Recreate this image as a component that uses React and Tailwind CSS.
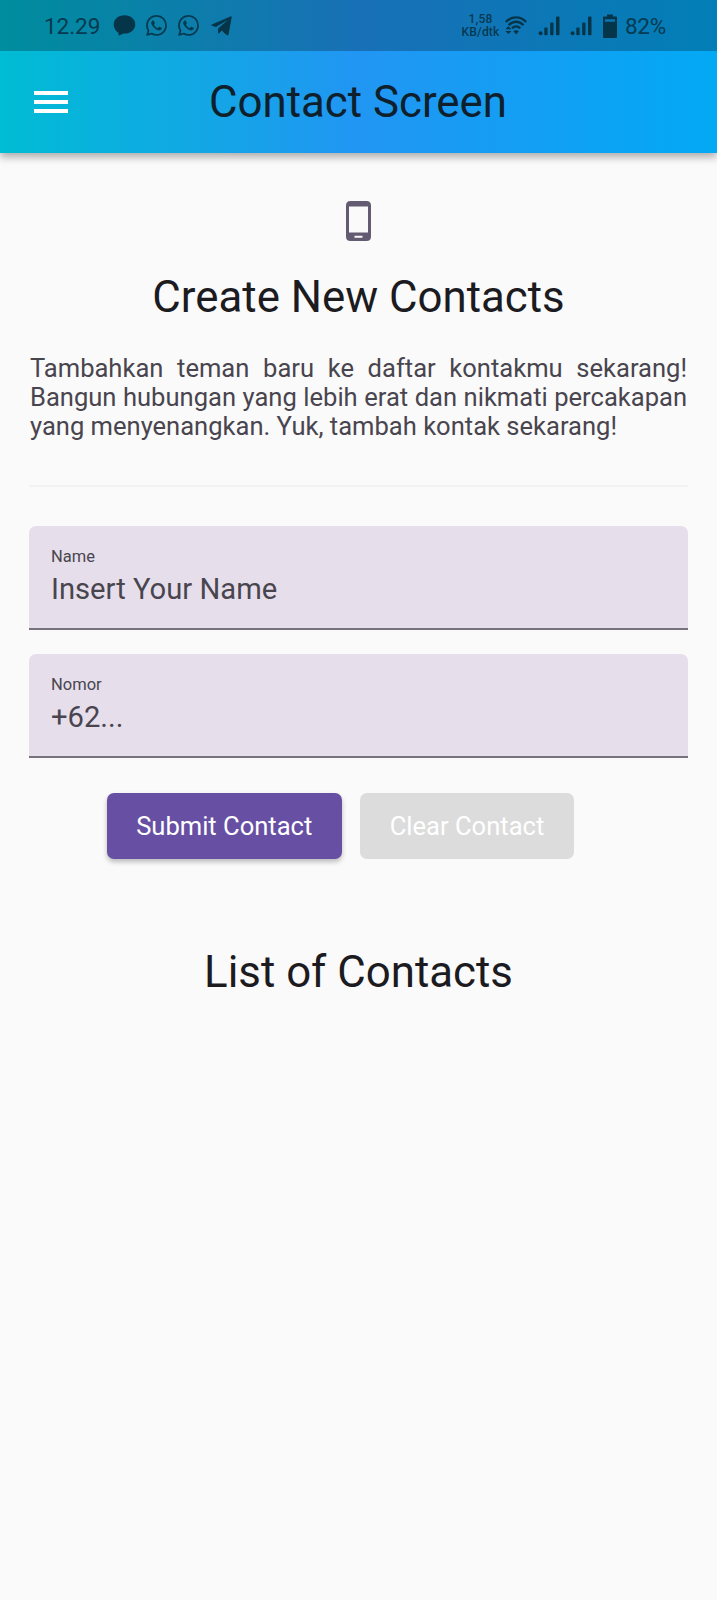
function StatusBar() {
  return (
    <div className="flex h-[51px] items-center bg-black/25 pl-[44px] text-[#053a50]">
      <span className="w-[56px] shrink-0 pt-px text-[22.500px] leading-[28px] tracking-[-0.050px] whitespace-nowrap">12.29</span>
      <svg className="ml-[13px] h-[21px] w-[23px] shrink-0" viewBox="0 0 23 21" fill="#053548">
        <path d="M11.5 .3C17.8.3 22.3 4.4 22.3 9.5s-4.500 9.100-10.800 9.100h-.6c-.5 0-4.700 2-5 2-.5 0-.2-2.500-.5-2.900C2.600 16 .7 13.100.7 9.500.7 4.400 5.200.3 11.500.3z" />
      </svg>
      <WhatsApp className="ml-[9.500px]" />
      <WhatsApp className="ml-[11px]" />
      <svg className="mt-px ml-[12px] h-[20px] w-[22px] shrink-0" viewBox="0 0 22 20" fill="#053548">
        <path d="M20.700 1.100 17.600 18.400c-.2 1-1.200 1.200-2 .7L10.600 14.400l-2.300 2.900c-.4.4-1.200.2-1.200-.5v-4.400L17 3.800 5 10.900.9 9.700C.1 9.400.1 8.900.9 8.500L19.400.5c.8-.3 1.500-.1 1.300.6z" />
      </svg>
      <div className="ml-auto mr-[5.500px] flex w-[38px] shrink-0 flex-col items-center pt-px text-[12px] leading-[13.500px] font-medium whitespace-nowrap">
        <span className="tracking-[0.200px]">1,58</span>
        <span className="tracking-[0.200px]">KB/dtk</span>
      </div>
      <svg className="h-[20px] w-[22px] shrink-0" viewBox="0 0 22 20" fill="none" stroke="#053548" strokeWidth="2.300">
        <path d="M.8 6C6.800-.3 15.400-.3 21.200 6M3.700 9.200c4.300-4.600 10.500-4.600 14.800 0M7 12.300c2.500-2.500 5.800-2.500 8.300 0" />
        <path d="m11.100 18.400-2.700-3.200c1.500-1.200 3.900-1.200 5.400 0zM3.400 10.300l3 3H.4zM3.400 18l3-3H.4z" fill="#053548" stroke="none" />
      </svg>
      <Signal className="ml-[10.500px]" />
      <Signal className="ml-[10.500px]" />
      <svg className="ml-[11px] h-[24px] w-[14px] shrink-0" viewBox="0 0 14 24">
        <path d="M4 .5h6v2h3q1 0 1 1V23q0 1-1 1H1q-1 0-1-1V3.500q0-1 1-1h3z" fill="#053548" />
        <path d="M2 5.200h10v2.600H2z" fill="#0a74b1" />
      </svg>
      <span className="ml-[8px] mr-[51px] w-[41px] shrink-0 pt-px text-[22.500px] leading-[28px] tracking-[-0.300px] whitespace-nowrap">82%</span>
    </div>
  );
}

function WhatsApp({ className }) {
  return (
    <svg className={`h-[21px] w-[21px] shrink-0 ${className}`} viewBox="0 0 24 24" fill="#053a50">
      <path d="M17.472 14.382c-.297-.149-1.758-.867-2.030-.967-.273-.099-.471-.148-.67.15-.197.297-.767.966-.94 1.164-.173.199-.347.223-.644.075-.297-.15-1.255-.463-2.390-1.475-.883-.788-1.480-1.761-1.653-2.059-.173-.297-.018-.458.13-.606.134-.133.298-.347.446-.52.149-.174.198-.298.298-.497.099-.198.05-.371-.025-.52-.075-.149-.669-1.612-.916-2.207-.242-.579-.487-.5-.669-.51-.173-.008-.371-.01-.57-.01-.198 0-.52.074-.792.372-.272.297-1.040 1.016-1.040 2.479 0 1.462 1.065 2.875 1.213 3.074.149.198 2.096 3.200 5.077 4.487.709.306 1.262.489 1.694.625.712.227 1.360.195 1.871.118.571-.085 1.758-.719 2.006-1.413.248-.694.248-1.289.173-1.413-.074-.124-.272-.198-.57-.347m-5.421 7.403h-.004a9.870 9.870 0 01-5.031-1.378l-.361-.214-3.741.982.998-3.648-.235-.374a9.860 9.860 0 01-1.510-5.260c.001-5.450 4.436-9.884 9.888-9.884 2.640 0 5.122 1.030 6.988 2.898a9.825 9.825 0 012.893 6.994c-.003 5.450-4.437 9.884-9.885 9.884m8.413-18.297A11.815 11.815 0 0012.050 0C5.495 0 .16 5.335.157 11.892c0 2.096.547 4.142 1.588 5.945L.057 24l6.305-1.654a11.882 11.882 0 005.683 1.448h.005c6.554 0 11.890-5.335 11.893-11.893a11.821 11.821 0 00-3.480-8.413z" />
    </svg>
  );
}

function Signal({ className }) {
  return (
    <svg className={`mt-px h-[20px] w-[22px] shrink-0 ${className}`} viewBox="0 0 22 20" fill="#053548">
      <circle cx="2.600" cy="17.200" r="2" />
      <rect x="6.300" y="11.500" width="3.300" height="7.800" rx="1" />
      <rect x="12.200" y="6.500" width="3.300" height="12.800" rx="1" />
      <rect x="18" y=".5" width="3.500" height="18.800" rx="1" />
    </svg>
  );
}

function Field({ label, value }) {
  return (
    <div className="h-[104px] rounded-t-[7px] border-b-2 border-[#77727c] bg-[#e6dfeb] pl-[22px] pt-[20px] text-[#49454f]">
      <div className="text-[16.500px] leading-[22px]">{label}</div>
      <div className="pt-[3px] text-[29.200px] leading-[36px]">{value}</div>
    </div>
  );
}

export default function App() {
  return (
    <div className="flex h-[1600px] w-[717px] flex-col bg-[#fafafa] font-['Roboto',sans-serif] text-[#1c1b1f]">
      <header className="h-[153px] bg-[linear-gradient(90deg,#00bcd4,#2196f3_50%,#03a9f4)] shadow-[0_4px_8px_rgba(0,0,0,0.320)]">
        <StatusBar />
        <div className="flex h-[102px] items-center pl-[34px]">
          <div className="flex w-[34px] flex-col gap-[5px]">
            <div className="h-[4px] bg-white" />
            <div className="h-[4px] bg-white" />
            <div className="h-[4px] bg-white" />
          </div>
          <h1 className="flex-1 pr-[69px] text-center text-[43.800px] leading-[52px] text-[#0e202c]">Contact Screen</h1>
        </div>
      </header>
      <main className="flex flex-col px-[29px] pt-[48px]">
        <svg className="h-[40px] w-[25px] self-center" viewBox="0 0 25 40">
          <path fillRule="evenodd" fill="#625b71" d="M4.500 0h16Q25 0 25 4.500v31q0 4.500-4.500 4.500h-16Q0 40 0 35.500v-31Q0 0 4.500 0zM3 5.500v26h19v-26zM8.500 34.700v2h8v-2z" />
        </svg>
        <h2 className="mt-[30px] text-center text-[43.800px] leading-[52px]">Create New Contacts</h2>
        <p className="mt-[30.500px] px-px text-justify text-[25.550px] leading-[29.300px] text-[#49454f]">
          Tambahkan teman baru ke daftar kontakmu sekarang! Bangun hubungan yang lebih erat dan nikmati percakapan yang menyenangkan. Yuk, tambah kontak sekarang!
        </p>
        <div className="mt-[43.500px] h-[2px] bg-[#f2f2f2]" />
        <div className="mt-[39px] flex flex-col gap-[24px]">
          <Field label="Name" value="Insert Your Name" />
          <Field label="Nomor" value="+62..." />
        </div>
        <div className="mt-[35px] ml-[77.500px] flex gap-[18px] text-[25.550px] text-white">
          <button className="h-[66px] w-[235.500px] rounded-[7px] bg-[#6750a4] whitespace-nowrap shadow-[0_3px_5px_rgba(0,0,0,0.250)]">Submit Contact</button>
          <button className="h-[66px] w-[214px] rounded-[7px] bg-[#dcdcdc] whitespace-nowrap" disabled>Clear Contact</button>
        </div>
        <h2 className="mt-[87px] text-center text-[43.800px] leading-[52px]">List of Contacts</h2>
      </main>
    </div>
  );
}
